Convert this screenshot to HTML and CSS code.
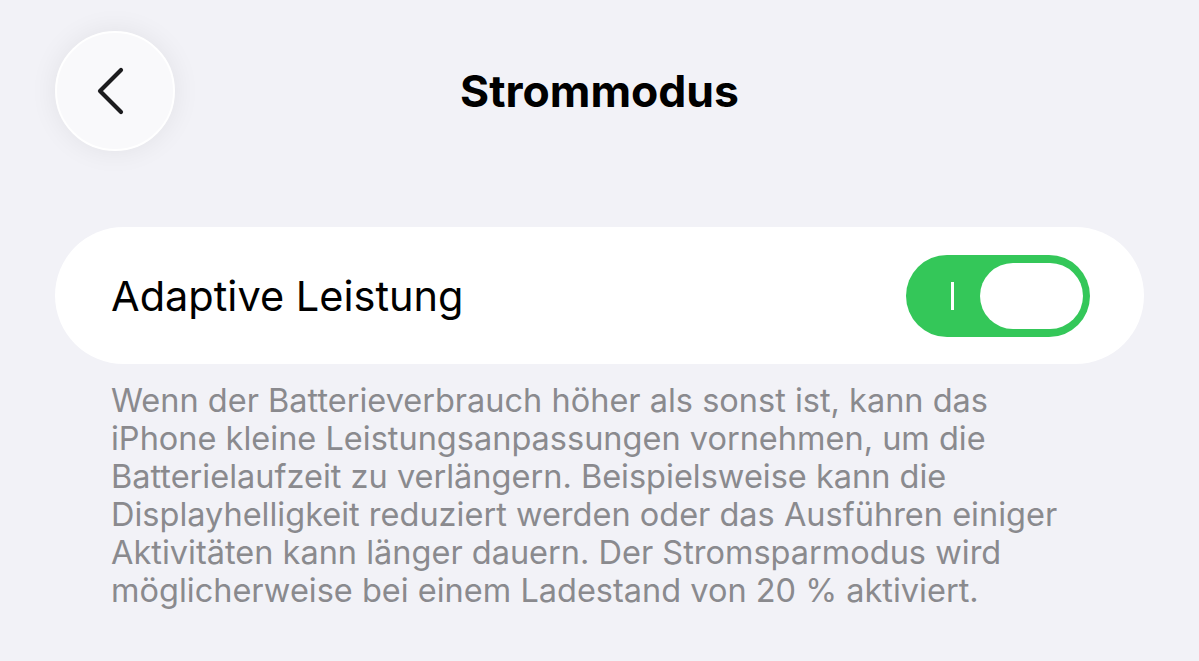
FILE: index.html
```html
<!DOCTYPE html>
<html lang="de">
<head>
  <meta charset="UTF-8">
  <title>Strommodus</title>
  <link rel="stylesheet" href="styles.css">
</head>
<body>
  <div class="page">
    <header class="nav">
      <button class="back" aria-label="Zurück">
        <svg width="30" height="48" viewBox="0 0 30 48">
          <path d="M25 3 L4 24 L25 45" fill="none" stroke="#1c1c1e" stroke-width="4.2" stroke-linecap="round" stroke-linejoin="round"/>
        </svg>
      </button>
      <h1 class="title">Strommodus</h1>
      <div></div>
    </header>

    <section class="card">
      <span class="label">Adaptive Leistung</span>
      <div class="switch on">
        <span class="mark"></span>
        <span class="knob"></span>
      </div>
    </section>

    <p class="footnote">
      Wenn der Batterieverbrauch höher als sonst ist, kann das<br>
      iPhone kleine Leistungsanpassungen vornehmen, um die<br>
      Batterielaufzeit zu verlängern. Beispielsweise kann die<br>
      Displayhelligkeit reduziert werden oder das Ausführen einiger<br>
      Aktivitäten kann länger dauern. Der Stromsparmodus wird<br>
      möglicherweise bei einem Ladestand von 20 % aktiviert.
    </p>
  </div>
</body>
</html>
```

FILE: styles.css
```css
body { margin: 0; background: #f2f2f7; font-family: Inter, "Noto Sans", sans-serif; color: #000; }
.page { padding: 0 55px; }

.nav { display: grid; grid-template-columns: 1fr auto 1fr; align-items: center; padding-top: 31px; height: 120px; }
.back { width: 120px; height: 120px; border-radius: 50%; border: 2px solid #fff; background: #f9f9fb; box-shadow: 0 0 28px rgba(0, 0, 0, 0.07); display: flex; align-items: center; justify-content: center; padding: 0 8px 0 0; cursor: pointer; }
.title { margin: 0; font-size: 44.5px; font-weight: 700; letter-spacing: 0; }

.card { margin-top: 76px; height: 137px; background: #fff; border-radius: 69px; display: flex; align-items: center; justify-content: space-between; padding: 0 54px 0 56px; }
.label { font-size: 41.5px; }

.switch { position: relative; width: 184px; height: 82px; border-radius: 41px; background: #34c759; }
.switch .mark { position: absolute; left: 45px; top: 27px; width: 3px; height: 28px; background: #fff; }
.switch .knob { position: absolute; right: 7px; top: 8px; width: 103px; height: 66px; border-radius: 33px; background: #fff; }

.footnote { margin: 18px 0 0; padding-left: 56px; font-size: 32.5px; line-height: 38px; color: #8a8a8e; }
```
